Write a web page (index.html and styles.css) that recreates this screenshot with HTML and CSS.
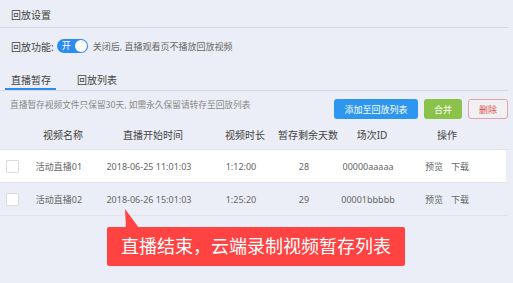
FILE: index.html
```html
<!DOCTYPE html>
<html lang="zh-CN">
<head>
    <meta charset="UTF-8">
    <title>回放设置</title>
    <link rel="stylesheet" href="styles.css">
</head>
<body>
    <div class="page">
        <div class="title">回放设置</div>

        <!-- 回放开关 -->
        <div class="switch-row">
            <span class="label">回放功能:</span>
            <span class="toggle"><span class="toggle-text">开</span><span class="knob"></span></span>
            <span class="hint">关闭后, 直播观看页不播放回放视频</span>
        </div>

        <!-- 标签页 -->
        <div class="tabs">
            <div class="tab active">直播暂存</div>
            <div class="tab">回放列表</div>
        </div>

        <div class="toolbar">
            <span class="desc">直播暂存视频文件只保留30天, 如需永久保留请转存至回放列表</span>
            <div class="actions">
                <button class="btn btn-blue">添加至回放列表</button>
                <button class="btn btn-green">合并</button>
                <button class="btn btn-del">删除</button>
            </div>
        </div>

        <div class="table">
            <div class="row head">
                <div></div>
                <div>视频名称</div>
                <div>直播开始时间</div>
                <div>视频时长</div>
                <div>暂存剩余天数</div>
                <div>场次ID</div>
                <div>操作</div>
            </div>
            <div class="row body white">
                <div class="cell-check"><span class="check"></span></div>
                <div>活动直播01</div>
                <div>2018-06-25 11:01:03</div>
                <div>1:12:00</div>
                <div>28</div>
                <div>00000aaaaa</div>
                <div class="ops"><span>预览</span><span>下载</span></div>
            </div>
            <div class="row body">
                <div class="cell-check"><span class="check"></span></div>
                <div>活动直播02</div>
                <div>2018-06-26 15:01:03</div>
                <div>1:25:20</div>
                <div>29</div>
                <div>00001bbbbb</div>
                <div class="ops"><span>预览</span><span>下载</span></div>
            </div>
        </div>

        <!-- 标注 -->
        <div class="callout">直播结束，云端录制视频暂存列表</div>
    </div>
</body>
</html>
```

FILE: styles.css
```css
body {
    margin: 0;
    background-color: #ebeef6;
    font-family: "Noto Sans", "Noto Sans CJK SC", sans-serif;
    color: #555;
}
.page {
    position: relative;
    width: 508px;
    height: 283px;
}
.title {
    font-size: 10px;
    line-height: 14px;
    padding: 8px 0 5px 11px;
    color: #444;
    border-bottom: 1px solid #d6d9e0;
}
.switch-row {
    display: flex;
    align-items: center;
    padding: 11px 0 0 11px;
    height: 14px;
    font-size: 10px;
}
.label {
    color: #444;
    margin-right: 3px;
}
.toggle {
    display: flex;
    align-items: center;
    justify-content: space-between;
    width: 31px;
    height: 14px;
    box-sizing: border-box;
    padding: 1px;
    border-radius: 7px;
    background-color: #2d8cf0;
}
.toggle-text {
    color: #fff;
    font-size: 9px;
    padding-left: 4px;
    line-height: 12px;
}
.knob {
    width: 12px;
    height: 12px;
    border-radius: 50%;
    background-color: #fff;
}
.hint {
    font-size: 9px;
    color: #666;
    margin-left: 5px;
}
.tabs {
    display: flex;
    margin-top: 20px;
    border-bottom: 1px solid #d6d9e0;
    height: 17px;
}
.tab {
    font-size: 10px;
    line-height: 14px;
    color: #444;
    padding: 0 6px;
    margin-left: 5px;
}
.tab.active {
    border-bottom: 2px solid #2d8cf0;
    padding: 0 5px 0 6px;
    margin-right: 10px;
}
.toolbar {
    display: flex;
    justify-content: space-between;
    align-items: flex-start;
    padding-top: 8px;
}
.desc {
    font-size: 8.7px;
    color: #888;
    padding-left: 10px;
    line-height: 12px;
}
.actions {
    display: flex;
    gap: 6px;
}
.btn {
    font-family: inherit;
    font-size: 9px;
    height: 20px;
    border: 1px solid transparent;
    border-radius: 3px;
    padding: 0;
    color: #fff;
    cursor: pointer;
}
.btn-blue {
    width: 84px;
    background-color: #2d97f0;
}
.btn-green {
    width: 38px;
    background-color: #8bc34a;
}
.btn-del {
    width: 40px;
    background-color: #f1f1f4;
    border-color: #e3a3a5;
    color: #d9534f;
}
.row {
    display: grid;
    grid-template-columns: 26px 74px 106px 78px 48px 80px 70px 24px;
    align-items: center;
    justify-items: center;
    white-space: nowrap;
}
.row.head {
    height: 30px;
    font-size: 10px;
    color: #444;
    border-bottom: 1px solid #dfe2e8;
}
.row.body {
    height: 32px;
    font-size: 9px;
    color: #666;
    border-bottom: 1px solid #dfe2e8;
}
.row.body > div {
    padding-right: 8px;
}
.row.body > .ops {
    padding-right: 0;
}
.row.body > .cell-check {
    justify-self: start;
    padding-right: 0;
}
.row.white {
    background-color: #fff;
    width: 506px;
}
.check {
    display: block;
    width: 11px;
    height: 11px;
    margin-left: 6px;
    border: 1px solid #dcdcdc;
    background-color: #fff;
    border-radius: 1px;
}
.ops span {
    margin: 0 4px;
}
.callout {
    position: absolute;
    left: 107px;
    top: 227px;
    width: 298px;
    height: 39px;
    line-height: 39px;
    text-align: center;
    background-color: #ff4343;
    border-radius: 2px;
    color: #fff;
    font-size: 18px;
}
.callout::before {
    content: "";
    position: absolute;
    left: 18px;
    top: -18px;
    width: 14px;
    height: 19px;
    background-color: #ff4343;
    clip-path: polygon(0 0, 100% 100%, 1px 100%);
}
```
